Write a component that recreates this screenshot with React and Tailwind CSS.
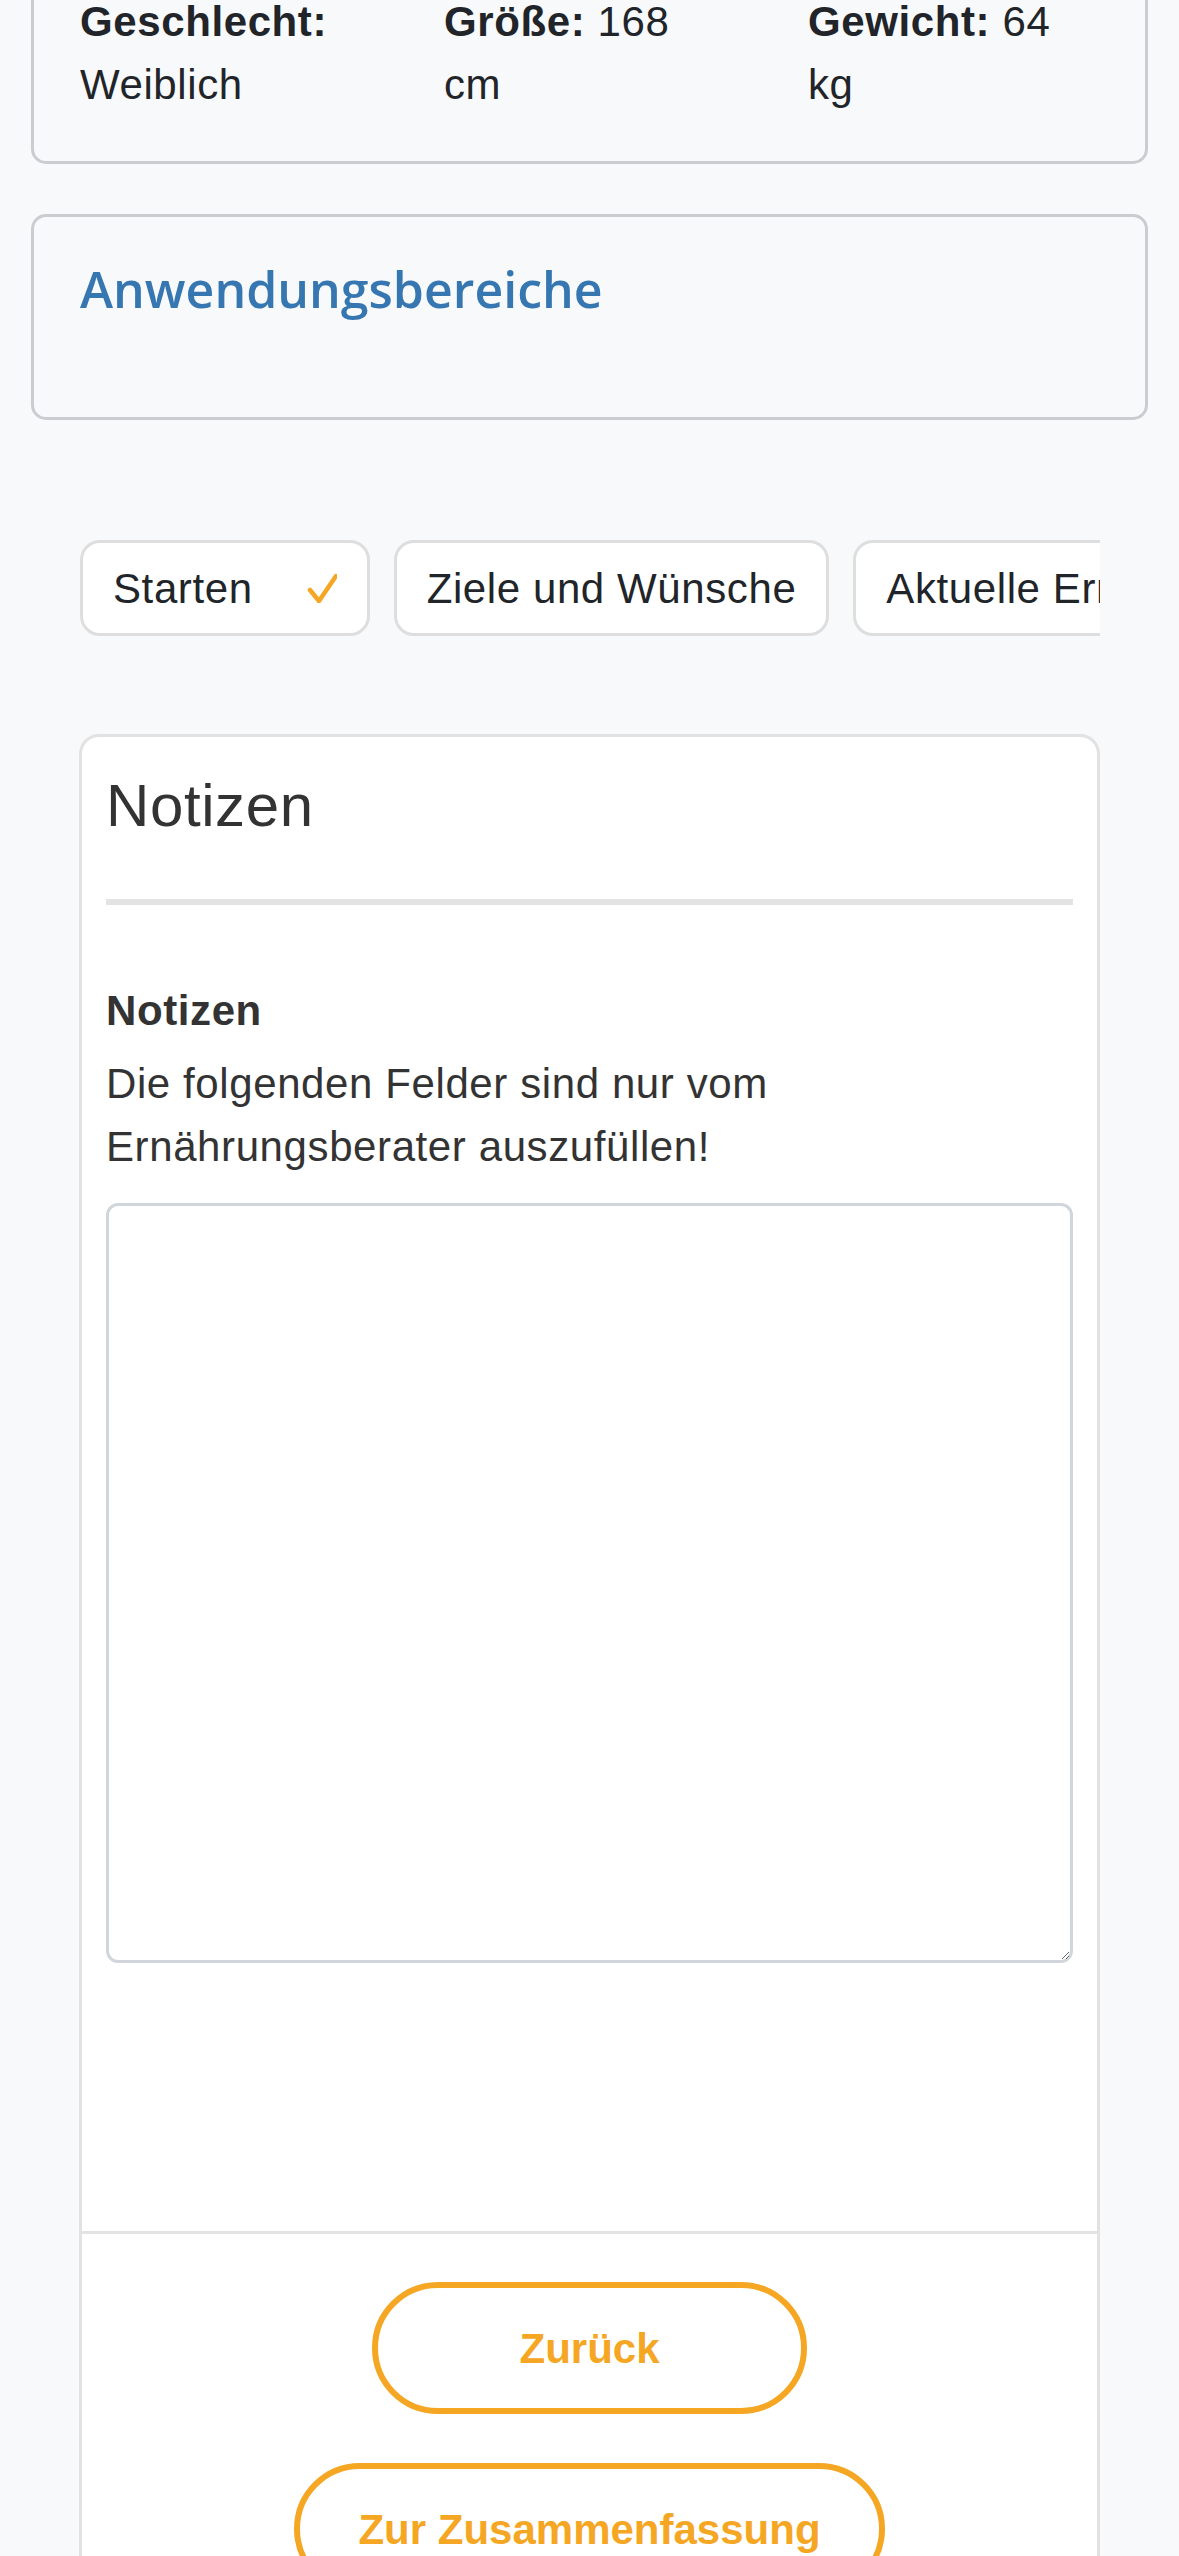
import { useState } from "react";

const profile = [
  { label: "Geschlecht:", value: "Weiblich" },
  { label: "Größe:", value: "168 cm" },
  { label: "Gewicht:", value: "64 kg" },
];

const steps = [
  { title: "Starten", done: true },
  { title: "Ziele und Wünsche", done: false },
  { title: "Aktuelle Ernährung", done: false },
];

function CheckMark() {
  return (
    <svg width="30" height="30" viewBox="0 0 30 30" className="ml-[54px] shrink-0">
      <polyline
        points="3,17 12,28 29,3"
        fill="none"
        stroke="#f5a623"
        strokeWidth="4.5"
        strokeLinecap="round"
        strokeLinejoin="round"
      />
    </svg>
  );
}

export default function App() {
  const [notes, setNotes] = useState("");

  return (
    <div className="min-h-screen bg-[#f8f9fb] font-['Liberation_Sans',Arial,sans-serif] text-[42px] leading-[63px] tracking-[0.6px] text-[#212529]">
      <div className="px-[31px]">
        {/* Patient data card (scrolled partly out of view) */}
        <div className="-mt-[58px] rounded-[15px] border-[3px] border-[#cbcccf] bg-[#f8f9fb] px-[46px] pt-[45px] pb-[45px]">
          <div className="grid grid-cols-[260px_260px_260px] gap-x-[104px]">
            {profile.map((item) => (
              <div key={item.label}>
                <span className="font-bold">{item.label}</span> {item.value}
              </div>
            ))}
          </div>
        </div>

        {/* Application areas */}
        <div className="mt-[50px] rounded-[15px] border-[3px] border-[#cbcccf] bg-[#f8f9fb] px-[46px] pt-[42px] pb-[47px]">
          <h2 className="mb-[51px] font-['Open_Sans',sans-serif] text-[50px] font-semibold leading-[60px] tracking-normal text-[#3777b1]">
            Anwendungsbereiche
          </h2>
        </div>

        <div className="px-[48px]">
          {/* Step tabs */}
          <div className="mt-[120px] ml-[1px] flex gap-[24px] overflow-hidden">
            {steps.map((step) => (
              <div
                key={step.title}
                className="flex h-[96px] shrink-0 items-center rounded-[20px] border-[3px] border-[#dedede] bg-white px-[30px] whitespace-nowrap"
              >
                <span>{step.title}</span>
                {step.done && <CheckMark />}
              </div>
            ))}
          </div>

          {/* Notes card */}
          <div className="mt-[98px] rounded-[20px] border-[3px] border-[#e2e2e2] bg-white text-[#333]">
            <div className="px-[24px] pt-[33px] pb-[268px]">
              <h3 className="text-[60px] leading-[72px]">Notizen</h3>
              <div className="mt-[57px] h-[6px] bg-[#e3e3e3]" />

              <label className="mt-[74px] block font-bold">Notizen</label>
              <p className="mt-[10px]">
                Die folgenden Felder sind nur vom Ernährungsberater auszufüllen!
              </p>
              <textarea
                value={notes}
                onChange={(e) => setNotes(e.target.value)}
                className="mt-[25px] block h-[760px] w-full rounded-[12px] border-[3px] border-[#d1d6dd] bg-white p-[20px] outline-none"
              />
            </div>

            <div className="flex flex-col items-center gap-[49px] border-t-[3px] border-[#e3e3e3] pt-[48px] pb-[48px]">
              <button className="flex h-[132px] min-w-[435px] items-center justify-center rounded-full border-[6px] border-[#f5a623] bg-white px-[58px] font-bold tracking-normal text-[#f5a623]">
                Zurück
              </button>
              <button className="flex h-[132px] min-w-[435px] items-center justify-center rounded-full border-[6px] border-[#f5a623] bg-white px-[58px] font-bold tracking-normal text-[#f5a623]">
                Zur Zusammenfassung
              </button>
            </div>
          </div>
        </div>
      </div>
    </div>
  );
}
